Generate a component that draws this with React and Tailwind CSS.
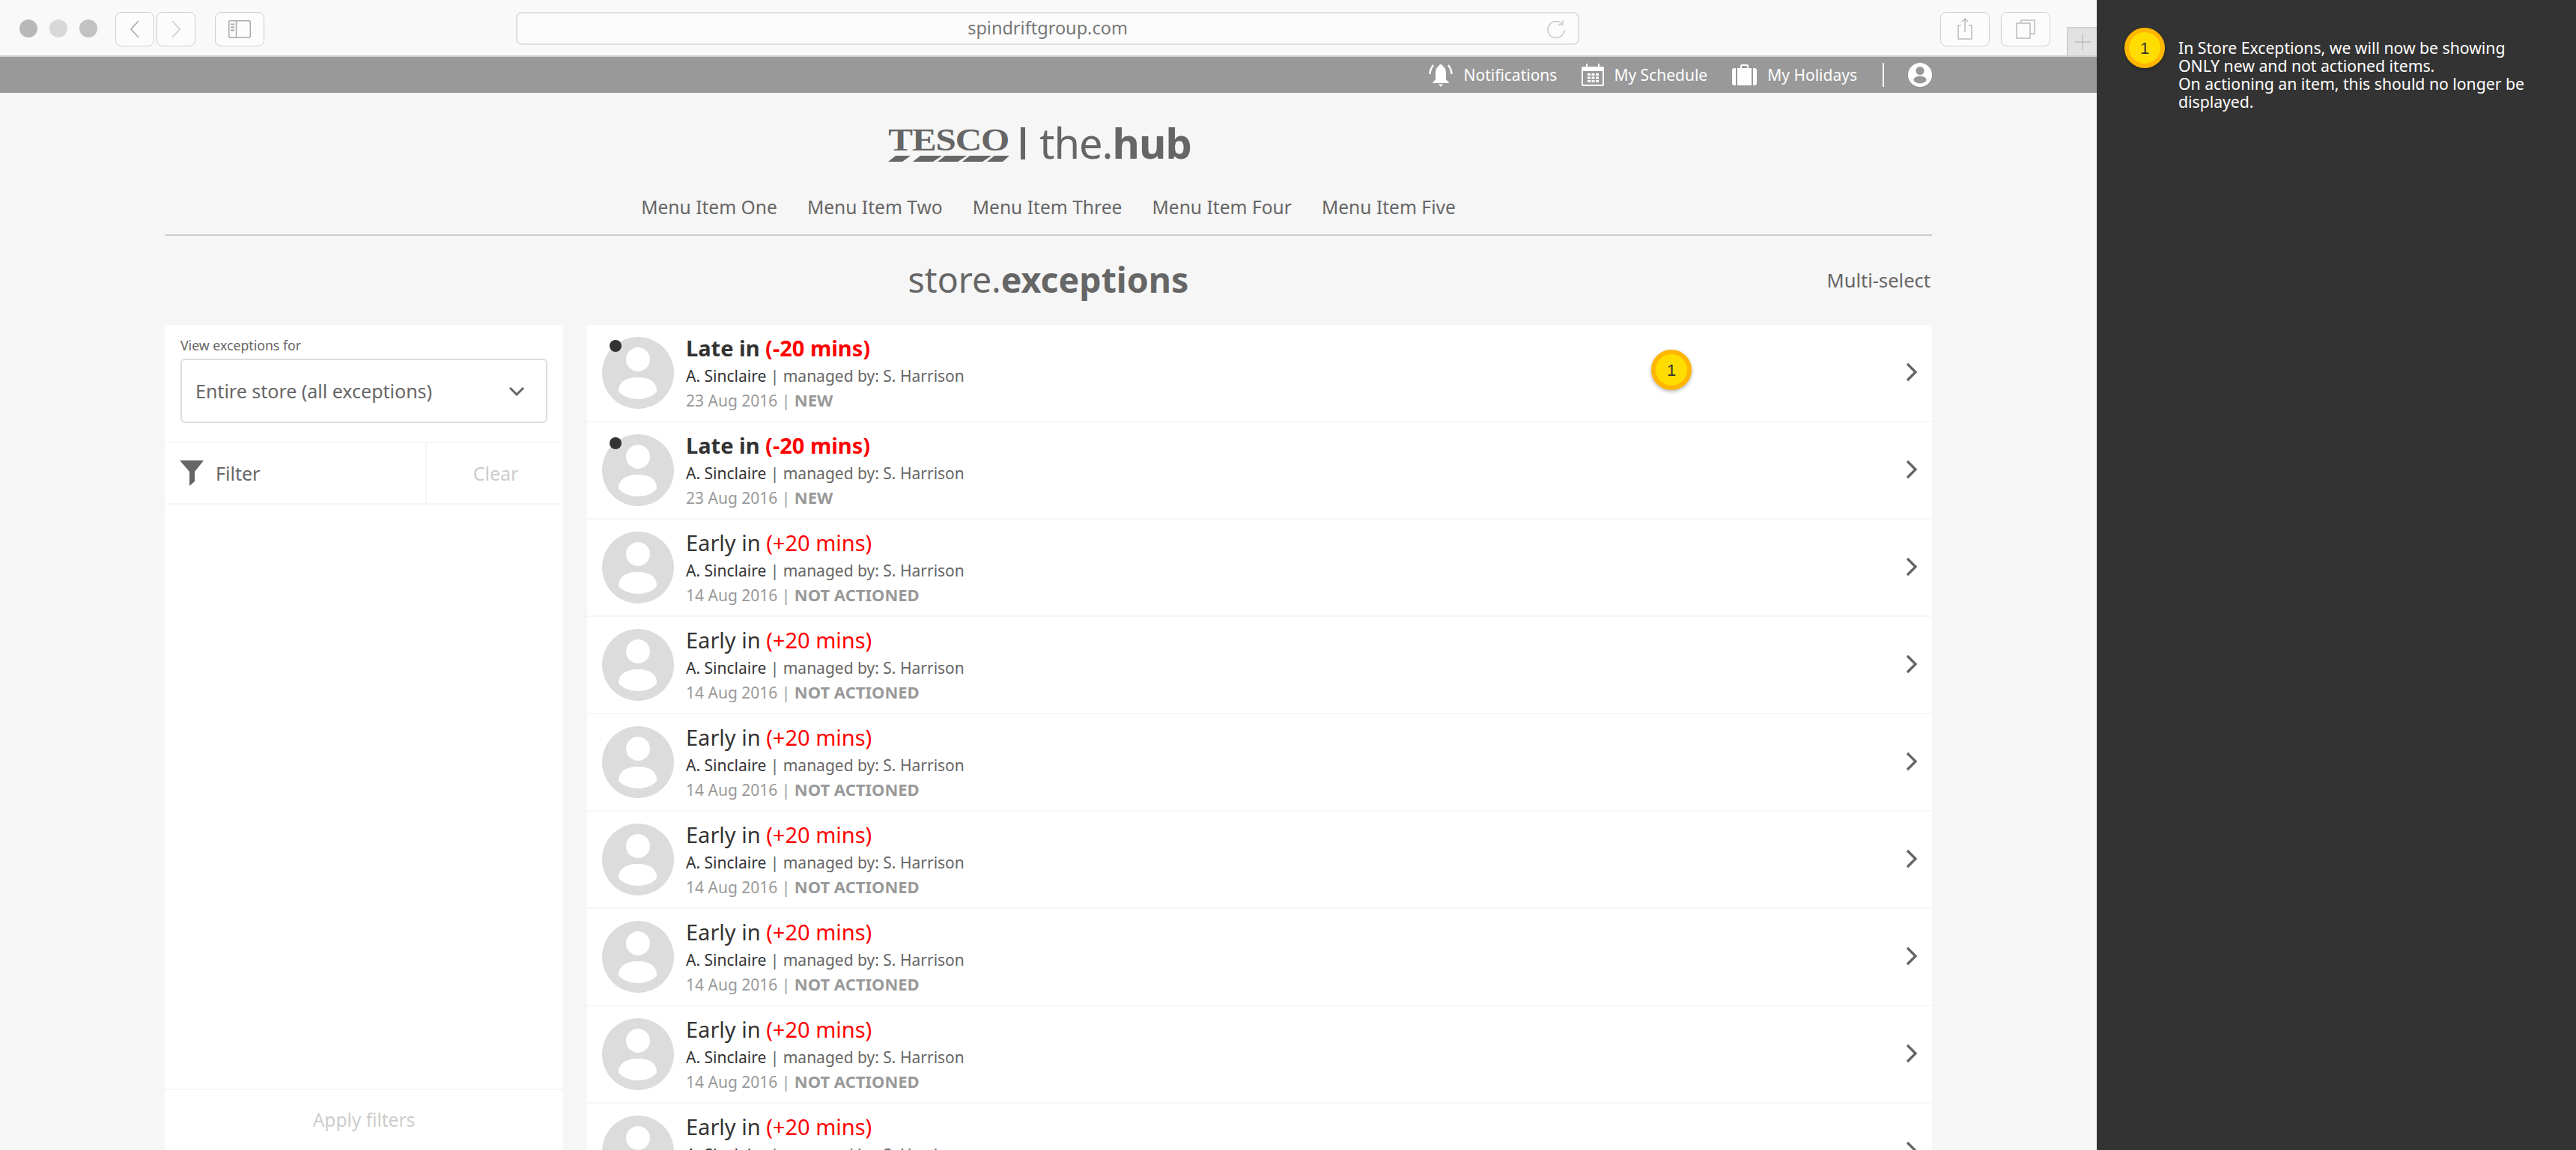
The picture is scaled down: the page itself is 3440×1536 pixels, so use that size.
import React from "react";

const font = { fontFamily: '"Noto Sans", sans-serif' };

function Chrome() {
  return (
    <div className="h-[76px] bg-[#f9f9f9] border-b-2 border-[#cfcfcf] flex items-start relative shrink-0">
      <div className="flex gap-[16px] pl-[26px] pt-[26px]">
        <span className="w-[24px] h-[24px] rounded-full bg-[#b8b8b8]" />
        <span className="w-[24px] h-[24px] rounded-full bg-[#d8d8d8]" />
        <span className="w-[24px] h-[24px] rounded-full bg-[#c2c2c2]" />
      </div>
      <div className="flex ml-[24px] mt-[16px] gap-[3px]">
        <div className="w-[52px] h-[46px] border border-[#cfcfcf] rounded-[8px] bg-[#fcfcfc] flex items-center justify-center">
          <svg width="14" height="24" viewBox="0 0 14 24" fill="none" stroke="#aaa" strokeWidth="1.6"><path d="M12 1 2 12l10 11" /></svg>
        </div>
        <div className="w-[52px] h-[46px] border border-[#cfcfcf] rounded-[8px] bg-[#fcfcfc] flex items-center justify-center">
          <svg width="14" height="24" viewBox="0 0 14 24" fill="none" stroke="#ccc" strokeWidth="1.6"><path d="m2 1 10 11L2 23" /></svg>
        </div>
      </div>
      <div className="ml-[26px] mt-[16px] w-[66px] h-[46px] border border-[#cfcfcf] rounded-[8px] bg-[#fcfcfc] flex items-center justify-center">
        <svg width="30" height="24" viewBox="0 0 30 24" fill="none"><rect x="0.75" y="0.75" width="28.5" height="22.5" rx="2" stroke="#aaa" strokeWidth="1.5" /><path d="M10.5 1v22" stroke="#aaa" strokeWidth="1.5" /><path d="M3 4.5h5v2H3zm0 4h5v2H3zm0 4h5v2H3z" fill="#aaa" /></svg>
      </div>
      <div className="ml-[336px] mt-[16px] w-[1420px] h-[44px] border-2 border-[#e0e0e0] rounded-[8px] bg-[#fcfcfc] flex items-center justify-center relative">
        <span className="text-[23.5px] text-[#777]">spindriftgroup.com</span>
        <svg className="absolute right-[16px] top-[8px]" width="26" height="26" viewBox="0 0 26 26" fill="none" stroke="#c8c8c8" strokeWidth="1.5"><path d="M21 6A11 11 0 1 0 24 14" /><path d="M22 1v6h-6" /></svg>
      </div>
      <div className="ml-auto mr-[62px] mt-[16px] flex gap-[15px]">
        <div className="w-[66px] h-[46px] border border-[#cfcfcf] rounded-[8px] bg-[#fcfcfc] flex items-center justify-center">
          <svg width="22" height="30" viewBox="0 0 22 30" fill="none" stroke="#bbb" strokeWidth="1.5"><path d="M6 10H2v18h18V10h-4M11 19V1M7 5l4-4 4 4" /></svg>
        </div>
        <div className="w-[66px] h-[46px] border border-[#cfcfcf] rounded-[8px] bg-[#fcfcfc] flex items-center justify-center">
          <svg width="26" height="26" viewBox="0 0 26 26" fill="none" stroke="#bbb" strokeWidth="1.5"><path d="M7 5V1h18v18h-6" /><rect x="1" y="5" width="18" height="20" /></svg>
        </div>
      </div>
      <div className="absolute right-0 top-[36px] w-[40px] h-[38px] bg-[#e2e2e2] border-t-2 border-l-2 border-[#d0d0d0] flex items-center justify-center">
        <svg width="22" height="22" viewBox="0 0 22 22" stroke="#bcbcbc" strokeWidth="1.3"><path d="M11 0v22M0 11h22" /></svg>
      </div>
    </div>
  );
}

function TopBar() {
  return (
    <div className="h-[48px] bg-[#999999] shrink-0 flex justify-end items-center pr-[220px] text-white text-[21px]">
      <svg className="mr-[13px]" width="34" height="32" viewBox="0 0 32 32" fill="#fff">
        <path d="M16 2c-1.500 0-2.500 1-2.500 2.200C10 6 9 10 9 14v8l-4 4.500V27h22v-.5L23 22v-8c0-4-1-8-4.500-9.800C18.500 3 17.500 2 16 2z" />
        <path d="M13 28.500h6L16 32z" />
        <path d="M6 3C3 7 1.500 11 1.500 15M26 3c3 4 4.500 8 4.500 12" fill="none" stroke="#fff" strokeWidth="2.400" />
      </svg>
      <span className="relative top-[1px]">Notifications</span>
      <svg className="ml-[33px] mr-[13px]" width="30" height="32" viewBox="0 0 30 32" fill="#fff">
        <path fillRule="evenodd" d="M2 5h4V1h2v4h14V1h2v4h4a2 2 0 0 1 2 2v22a2 2 0 0 1-2 2H2a2 2 0 0 1-2-2V7a2 2 0 0 1 2-2zm0 6v18h26V11z" />
        <path d="M8 14h4v3H8zm5.500 0h4v3h-4zM19 14h4v3h-4zM8 18.500h4v3H8zm5.500 0h4v3h-4zm5.500 0h4v3h-4zM8 23h4v3H8zm5.500 0h4v3h-4zm5.500 0h4v3h-4z" />
      </svg>
      <span className="relative top-[1px]">My Schedule</span>
      <svg className="ml-[33px] mr-[14px]" width="33" height="30" viewBox="0 0 33 30" fill="#fff"><path d="M11 6V3a2 2 0 0 1 2-2h7a2 2 0 0 1 2 2v3h-2V3h-7v3z" /><rect x="7" y="6" width="19" height="23" /><path d="M0 9a3 3 0 0 1 3-3h2v23H3a3 3 0 0 1-3-3zM33 9a3 3 0 0 0-3-3h-2v23h2a3 3 0 0 0 3-3z" /></svg>
      <span className="relative top-[1px]">My Holidays</span>
      <span className="ml-[34px] mr-[32px] w-[2px] h-[32px] bg-white" />
      <svg width="32" height="32" viewBox="0 0 32 32"><circle cx="16" cy="16" r="16" fill="#fff" /><circle cx="16" cy="10.500" r="5.500" fill="#999" /><ellipse cx="16" cy="22.500" rx="8.500" ry="5" fill="#999" /></svg>
    </div>
  );
}

function Logo() {
  return (
    <div className="h-[111px] flex items-start justify-center pt-[38px] pr-[23px] text-[#666] shrink-0">
      <div className="w-[162px] mt-[7px] flex flex-col items-center">
        <span className="text-[42px] leading-[36px] font-bold tracking-[-1px] scale-x-[1.17]" style={{ fontFamily: '"Liberation Serif", serif' }}>TESCO</span>
        <svg className="mt-[3px]" width="162" height="8" viewBox="0 0 162 8" fill="#666">
          <path d="M10 0h20L19 8H0zM43 0h29L60 8H33zM76 0h29L93 8H66zM109 0h29l-12 8H99zM142 0h20l-9 8h-21z" />
        </svg>
      </div>
      <span className="w-[6px] h-[43px] bg-[#666] ml-[15px] mt-[8px]" />
      <span className="text-[56px] leading-[56px] ml-[19px] tracking-[-1px]">the.<b>hub</b></span>
    </div>
  );
}

function Nav() {
  return (
    <div className="h-[80px] border-b-2 border-[#cccccc] flex justify-center gap-[40px] pt-[26px] text-[24.600px] leading-[32px] text-[#666] shrink-0">
      {["Menu Item One", "Menu Item Two", "Menu Item Three", "Menu Item Four", "Menu Item Five"].map((t) => (
        <span key={t}>{t}</span>
      ))}
    </div>
  );
}

function Row({ bold, title, delta, date, status, badge }) {
  return (
    <div className="h-[130px] bg-white border-b-2 border-[#f6f6f6] flex items-start relative shrink-0">
      <div className="relative w-[96px] h-[96px] ml-[20px] mt-[16px] shrink-0">
        <svg width="96" height="96" viewBox="0 0 96 96"><circle cx="48" cy="48" r="48" fill="#dcdcdc" /><circle cx="48" cy="30" r="16" fill="#fff" /><path d="M48 54c18 0 25 8 25 18 0 2-8 11-25 11S22 74 22 72c0-10 8-18 26-18z" fill="#fff" /></svg>
        {bold && <span className="absolute left-[10px] top-[4px] w-[16px] h-[16px] rounded-full bg-[#333]" />}
      </div>
      <div className="ml-[16px] mt-[13px] flex flex-col">
        <div className={`text-[29px] leading-[36px] text-[#333] ${bold ? "font-bold" : ""}`}>
          {title} <span className="text-[#ff0000]">{delta}</span>
        </div>
        <div className="text-[21px] leading-[31px] text-[#666] mt-[4px]">
          <span className="text-[#333]">A. Sinclaire</span> | managed by: S. Harrison
        </div>
        <div className="text-[21px] leading-[33px] text-[#999]">
          {date} | <b className="text-[22px]">{status}</b>
        </div>
      </div>
      <svg className="absolute right-[19px] top-[50px]" width="16" height="26" viewBox="0 0 16 26" fill="none" stroke="#666" strokeWidth="3.400"><path d="M2 2l11 11L2 24" /></svg>
      {badge && <Badge className="absolute left-[1421px] top-[33px]" />}
    </div>
  );
}

function Badge({ className = "" }) {
  return (
    <span className={`w-[54px] h-[54px] rounded-full bg-[#ffdd00] border-[6px] border-[#ffb600] shadow-[0_2px_5px_rgba(0,0,0,0.3)] flex items-center justify-center text-[22px] text-[#333] ${className}`} style={{ fontFamily: '"Liberation Sans", sans-serif' }}>1</span>
  );
}

function Sidebar() {
  return (
    <div className="w-[532px] shrink-0 bg-white flex flex-col text-[#666]">
      <div className="h-[158px] border-b-2 border-[#f6f6f6] px-[21px] pt-[14px] shrink-0">
        <div className="text-[17.700px] leading-[26px]">View exceptions for</div>
        <div className="mt-[5px] h-[86px] border-2 border-[#dddddd] rounded-[6px] flex items-center justify-between pl-[18px] pr-[28px] pt-[1px] text-[25px]">
          <span>Entire store (all exceptions)</span>
          <svg width="22" height="14" viewBox="0 0 22 14" fill="none" stroke="#666" strokeWidth="3"><path d="M2 2l9 9 9-9" /></svg>
        </div>
      </div>
      <div className="h-[82px] border-b-2 border-[#f6f6f6] flex shrink-0">
        <div className="w-[350px] border-r-2 border-[#f6f6f6] flex items-center pl-[20px] gap-[16px]">
          <svg width="32" height="34" viewBox="0 0 32 34" fill="#666"><path d="M0 0h32L20 15v13l-7 6V15z" /></svg>
          <span className="text-[25px] relative top-[1px]">Filter</span>
        </div>
        <div className="flex-1 flex items-center justify-center pl-[2px] pt-[2px] text-[25px] text-[#cccccc]">Clear</div>
      </div>
      <div className="flex-1" />
      <div className="h-[82px] border-t-2 border-[#f6f6f6] flex items-center justify-center pt-[1px] text-[24.500px] text-[#cccccc] shrink-0">Apply filters</div>
    </div>
  );
}

export default function App() {
  const late = { bold: true, title: "Late in", delta: "(-20 mins)", date: "23 Aug 2016", status: "NEW" };
  const early = { title: "Early in", delta: "(+20 mins)", date: "14 Aug 2016", status: "NOT ACTIONED" };
  return (
    <div className="w-[3440px] h-[1536px] flex overflow-hidden" style={font}>
      <main className="w-[2800px] shrink-0 flex flex-col bg-[#f6f6f6]">
        <Chrome />
        <TopBar />
        <div className="flex-1 min-h-0 flex flex-col px-[220px]">
          <Logo />
          <Nav />
          <div className="h-[119px] flex items-center justify-center pb-[2px] relative shrink-0">
            <span className="text-[46.500px] text-[#666]">store.<b>exceptions</b></span>
            <span className="absolute right-[2px] top-[40px] text-[25.500px] text-[#666]">Multi-select</span>
          </div>
          <div className="flex-1 min-h-0 flex gap-[32px]">
            <Sidebar />
            <div className="flex-1 flex flex-col overflow-hidden">
              <Row {...late} badge />
              <Row {...late} />
              {Array.from({ length: 7 }).map((_, i) => (
                <Row key={i} {...early} />
              ))}
            </div>
          </div>
        </div>
      </main>
      <aside className="w-[640px] shrink-0 bg-[#333333] flex items-start pl-[37px] pt-[37px] text-white">
        <Badge className="shrink-0" />
        <p className="ml-[18px] mt-[15px] w-[500px] text-[21.200px] leading-[24px]">
          In Store Exceptions, we will now be showing<br />
          ONLY new and not actioned items.<br />
          On actioning an item, this should no longer be displayed.
        </p>
      </aside>
    </div>
  );
}
